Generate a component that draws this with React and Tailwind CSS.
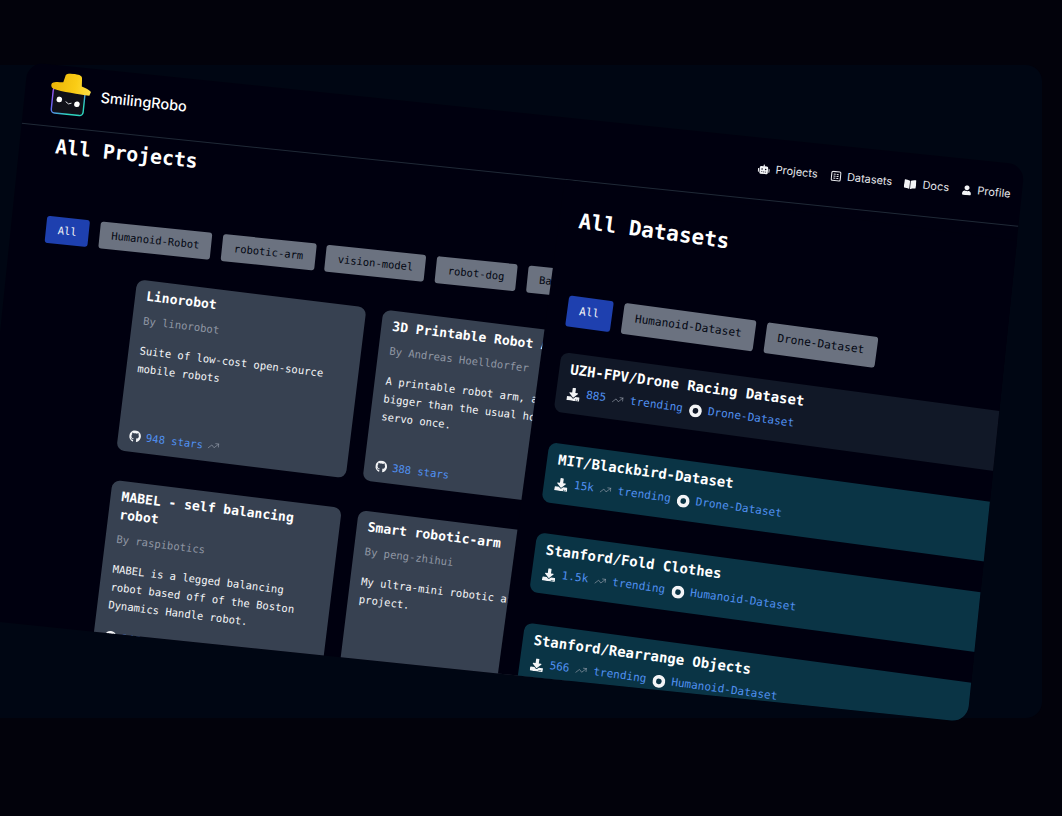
import React from "react";
import { FaRobot, FaBookOpen, FaUser, FaGithub, FaDownload } from "react-icons/fa";
import { TrendingUp } from "lucide-react";

const MONO = "font-['DejaVu_Sans_Mono',monospace]";

function Logo() {
  return (
    <svg width="42" height="44" viewBox="0 0 42 44" className="flex-none mb-[4px]">
      <defs>
        <linearGradient id="bd" x1="0" y1="0" x2="0.9" y2="1">
          <stop offset="0" stopColor="#a855f7" />
          <stop offset="0.45" stopColor="#6366f1" />
          <stop offset="0.8" stopColor="#2dd4bf" />
          <stop offset="1" stopColor="#2dd4bf" />
        </linearGradient>
        <linearGradient id="hat" x1="0" y1="0" x2="1" y2="0">
          <stop offset="0" stopColor="#eab308" />
          <stop offset="0.6" stopColor="#facc15" />
          <stop offset="1" stopColor="#fde047" />
        </linearGradient>
      </defs>
      <rect x="3" y="15" width="32" height="26" rx="3.5" fill="#101018" stroke="url(#bd)" strokeWidth="1.4" />
      <g transform="rotate(4 20 12)">
        <path d="M1 13 C5 10 10 11 12 10 L13 4 C13 1 16 0 22 0 C28 0 30 1 30 4 L31 11 C35 12 39 13 41 15 L40 19 C30 19 12 20 3 18 C1 17 0 15 1 13 Z" fill="url(#hat)" />
      </g>
      <circle cx="10" cy="27" r="2.8" fill="#fff" />
      <circle cx="28" cy="30" r="2.8" fill="#fff" />
      <path d="M16.5 28.5 Q19.5 32 22.5 29.5" stroke="#e5e7eb" strokeWidth="0.9" fill="none" />
    </svg>
  );
}

function TableIcon() {
  return (
    <svg width="11" height="11" viewBox="0 0 11 11" fill="none" stroke="#e5e7eb" strokeWidth="1.1" className="flex-none">
      <rect x="1" y="1" width="9" height="9" rx="1.2" />
      <path d="M3 3.7h2M6 3.7h2M3 5.7h2M6 5.7h2M3 7.7h2M6 7.7h2" strokeWidth="1" />
    </svg>
  );
}

function NavItem({ icon, label }) {
  return (
    <div className="flex items-center gap-[6px]">
      {icon}
      <span>{label}</span>
    </div>
  );
}

function Tag({ label, active, big }) {
  return (
    <div
      className={`flex-none rounded-[3px] flex items-center whitespace-nowrap ${
        big ? "h-[31px] px-[12.5px] text-[11.2px]" : "h-[27px] px-[12px] text-[10.5px]"
      } ${active ? "bg-[#1e40af] text-gray-100" : "bg-[#6b7280] text-gray-950"}`}
    >
      {label}
    </div>
  );
}

function ProjectCard({ title, by, desc, stars, trend }) {
  return (
    <div className="bg-[#374151] rounded-lg px-[11px] pt-[7px] pb-[9px] flex flex-col min-w-0">
      <div className="text-[13.1px] leading-[18px] font-bold text-white">{title}</div>
      <div className="text-[10.6px] leading-[14px] mt-[8px] text-[#8f96a3]">{by}</div>
      <div className="text-[10.6px] leading-[18px] mt-[14px] text-gray-100 max-w-[196px]">{desc}</div>
      <div className="mt-auto flex items-center gap-[5px] text-[10.6px] leading-[14px]">
        <FaGithub className="text-gray-100 text-[12px] flex-none" />
        <span className="text-[#5090f0]">{stars} stars</span>
        {trend && <TrendingUp size={12} strokeWidth={1.2} className="text-gray-400" />}
      </div>
    </div>
  );
}

function DatasetCard({ title, count, tag, dark }) {
  return (
    <div className={`h-[60px] rounded-lg px-[11.5px] pt-[7px] ${dark ? "bg-[#111827]" : "bg-[#0a3445]"}`}>
      <div className="text-[14px] leading-[19px] font-bold text-white whitespace-nowrap">{title}</div>
      <div className="flex items-center gap-[6.1px] text-[11.1px] leading-[16px] text-[#5090f0] mt-[6px] whitespace-nowrap">
        <FaDownload className="text-gray-100 text-[13px] flex-none" />
        <span>{count}</span>
        <TrendingUp size={12} strokeWidth={1.2} className="text-gray-400" />
        <span>trending</span>
        <svg width="13" height="13" viewBox="0 0 13 13" className="flex-none">
          <circle cx="6.5" cy="6.5" r="4.6" fill="none" stroke="#f3f4f6" strokeWidth="3.6" />
        </svg>
        <span>{tag}</span>
      </div>
    </div>
  );
}

export default function App() {
  return (
    <div className="relative w-[1062px] h-[816px] overflow-hidden bg-[#02020b]">
      {/* backdrop panel */}
      <div className="absolute left-[-40px] top-[65px] w-[1082px] h-[653px] rounded-2xl bg-[#000613]" />
      {/* tilted window */}
      <div className={`absolute left-[28px] top-[62px] w-[1002px] h-[560px] origin-top-left rotate-[5.9deg] rounded-2xl overflow-hidden bg-[#00000f] ${MONO}`}>
        <header className="h-[62px] border-b border-[#1f2937] flex items-center justify-between pl-[25px] pr-[11px] font-['Inter',sans-serif]">
          <div className="flex items-center gap-[9px]">
            <Logo />
            <span className="text-[14.5px] font-medium text-white mb-[6px]">SmilingRobo</span>
          </div>
          <nav className="flex items-center gap-[12.5px] text-[11px] text-gray-200">
            <NavItem icon={<FaRobot className="text-[12px] text-gray-100" />} label="Projects" />
            <NavItem icon={<TableIcon />} label="Datasets" />
            <NavItem icon={<FaBookOpen className="text-[12px] text-gray-100" />} label="Docs" />
            <NavItem icon={<FaUser className="text-[10px] text-gray-100" />} label="Profile" />
          </nav>
        </header>
        <main className="flex">
          <section className="w-[546px] flex-none pl-[35px] pt-[6px]">
            <h1 className="pl-[1px] text-[19.8px] leading-[28px] font-bold text-white">All Projects</h1>
            <div className="flex gap-[10.8px] mt-[55px]">
              <Tag label="All" active />
              <Tag label="Humanoid-Robot" />
              <Tag label="robotic-arm" />
              <Tag label="vision-model" />
              <Tag label="robot-dog" />
              <Tag label="Balancing-Robot" />
            </div>
            <div className="ml-[96px] mt-[27px] w-[478px] grid grid-cols-[231px_231px] grid-rows-[172px_172px] gap-x-[17px] gap-y-[30px] origin-top-left rotate-[1.1deg]">
              <ProjectCard title="Linorobot" by="By linorobot" desc="Suite of low-cost open-source mobile robots" stars="948" trend />
              <ProjectCard title="3D Printable Robot Arm" by="By Andreas Hoelldorfer" desc="A printable robot arm, a bit bigger than the usual hobby servo once." stars="388" />
              <ProjectCard title="MABEL - self balancing robot" by="By raspibotics" desc="MABEL is a legged balancing robot based off of the Boston Dynamics Handle robot." stars="147" />
              <ProjectCard title="Smart robotic-arm" by="By peng-zhihui" desc="My ultra-mini robotic arm project." stars="120" />
            </div>
          </section>
          <section className="relative z-10 w-[560px] h-[640px] flex-none pl-[19.5px] bg-[#00000f] origin-top-left rotate-[1.8deg]">
            <h1 className="pt-[24px] text-[21px] leading-[30px] font-bold text-white">All Datasets</h1>
            <div className="flex gap-[11px] mt-[60px]">
              <Tag label="All" active big />
              <Tag label="Humanoid-Dataset" big />
              <Tag label="Drone-Dataset" big />
            </div>
            <div className="mt-[26px] flex flex-col gap-[31px]">
              <DatasetCard dark title="UZH-FPV/Drone Racing Dataset" count="885" tag="Drone-Dataset" />
              <DatasetCard title="MIT/Blackbird-Dataset" count="15k" tag="Drone-Dataset" />
              <DatasetCard title="Stanford/Fold Clothes" count="1.5k" tag="Humanoid-Dataset" />
              <DatasetCard title="Stanford/Rearrange Objects" count="566" tag="Humanoid-Dataset" />
            </div>
          </section>
        </main>
      </div>
    </div>
  );
}
